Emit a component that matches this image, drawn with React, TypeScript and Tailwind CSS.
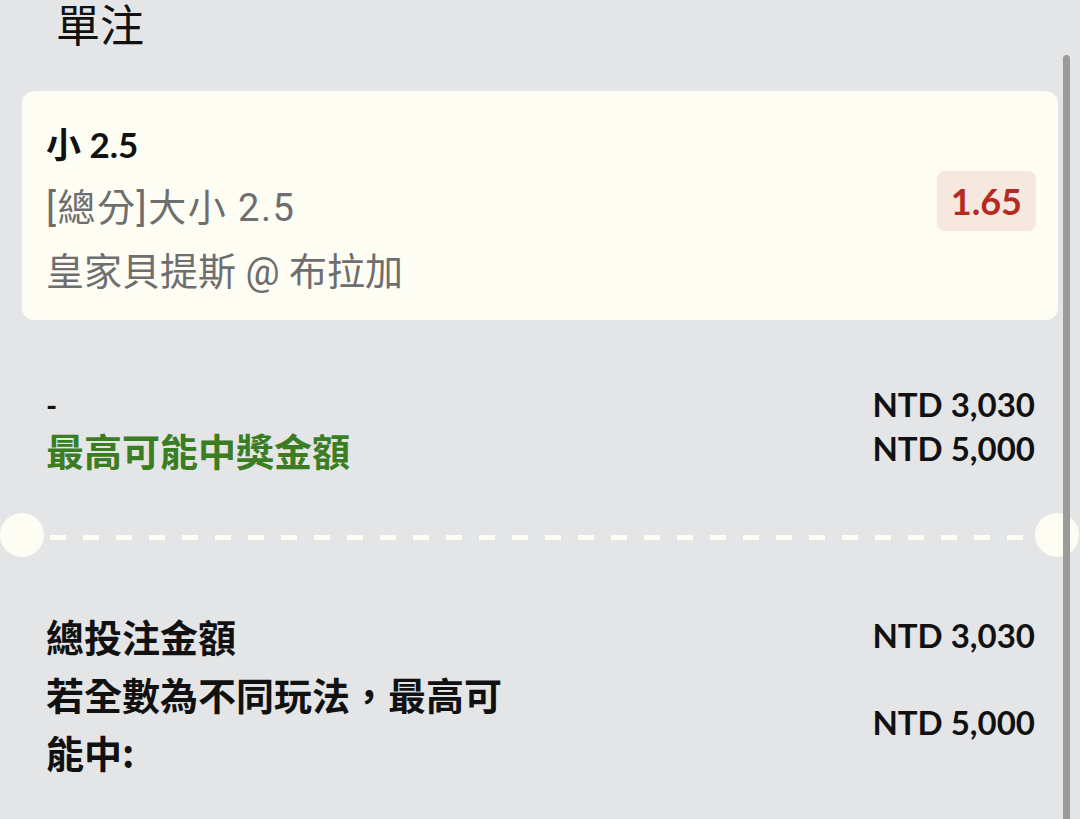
import React from "react";

const lato = "font-['Lato','Noto_Sans_CJK_TC',sans-serif]";
const cjk = "font-['Noto_Sans_CJK_TC','Noto_Sans',sans-serif]";
const roboto = "font-['Roboto','Noto_Sans_CJK_TC',sans-serif]";
const amount = `${lato} text-[33px] font-bold text-[#111]`;

export default function App() {
  return (
    <div className="relative w-[1080px] h-[819px] overflow-hidden bg-[#e4e5e7]">
      {/* HEADER */}
      <h1 className={`${cjk} pl-[56px] pt-[1px] text-[44px] leading-[44px] text-[#111]`}>單注</h1>

      {/* BET CARD */}
      <div className="mx-[22px] mt-[46px] h-[229px] rounded-[12px] bg-[#fefdf4] pl-[24px] pr-[22px] flex items-center justify-between">
        <div className="pt-[4px]">
          <div className={`${lato} text-[35px] font-bold leading-[64px] text-[#111]`}>小 2.5</div>
          <div className={`${roboto} text-[38px] tracking-[1.5px] leading-[64px] text-[#6e6e6e]`}>[總分]大小 2.5</div>
          <div className={`${roboto} text-[38px] leading-[64px] text-[#6e6e6e]`}>皇家貝提斯 @ 布拉加</div>
        </div>
        <div className="mt-[-10px] rounded-[8px] bg-[#f6e7df] px-[14px] h-[60px] flex items-center">
          <span className={`${lato} text-[36px] font-bold text-[#b52a20]`}>1.65</span>
        </div>
      </div>

      {/* ODDS SUMMARY */}
      <div className="pl-[46px] pr-[45px] pt-[63px]">
        <div className="flex items-center justify-between h-[44px]">
          <span className={`${lato} text-[30px] font-bold text-[#111]`}>-</span>
          <span className={amount}>NTD 3,030</span>
        </div>
        <div className="flex items-center justify-between h-[44px]">
          <span className={`${cjk} text-[38px] font-bold text-[#3b7d23]`}>最高可能中獎金額</span>
          <span className={amount}>NTD 5,000</span>
        </div>
      </div>

      {/* TICKET DIVIDER */}
      <div className="relative mt-[42px] h-[44px] flex items-center">
        <div className="absolute left-0 top-0 w-[44px] h-[44px] rounded-full bg-[#fefdf4]" />
        <div className="ml-[50px] mr-[50px] mt-[4px] flex-1 h-[5px] bg-[repeating-linear-gradient(to_right,#fefdf4_0px,#fefdf4_16px,transparent_16px,transparent_33px)]" />
        <div className="absolute left-[1035px] top-0 w-[44px] h-[44px] rounded-full bg-[#fefdf4]" />
      </div>

      {/* TOTALS */}
      <div className="pl-[46px] pr-[45px] pt-[50px]">
        <div className="flex items-center justify-between">
          <div className={`${cjk} text-[38px] font-bold leading-[58px] text-[#111]`}>總投注金額</div>
          <div className={amount}>NTD 3,030</div>
        </div>
        <div className="flex items-center justify-between">
          <div className={`${cjk} w-[480px] text-[38px] font-bold leading-[58px] text-[#111]`}>
            若全數為不同玩法，最高可能中:
          </div>
          <div className={amount}>NTD 5,000</div>
        </div>
      </div>

      {/* SCROLLBAR */}
      <div className="absolute left-[1063px] top-[55px] bottom-0 w-[7px] rounded-t-full bg-[#9b9b9b]" />
    </div>
  );
}
